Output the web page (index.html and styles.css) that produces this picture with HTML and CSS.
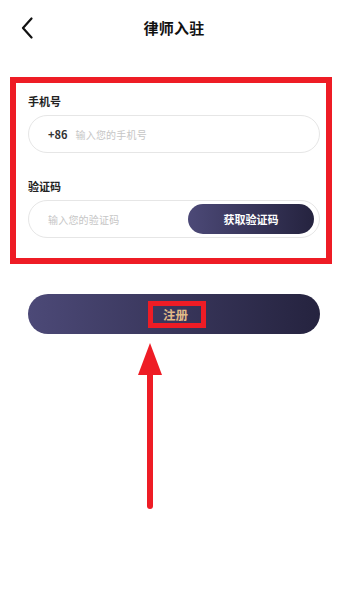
FILE: index.html
```html
<!DOCTYPE html>
<html lang="zh-CN">
<head>
<meta charset="utf-8">
<title>律师入驻</title>
<link rel="stylesheet" href="styles.css">
</head>
<body>
<div class="page">
  <header class="nav">
    <div class="nav-left">
      <svg class="back" width="12" height="22" viewBox="0 0 12 22"><path d="M10.5 1.5 L2 11 L10.5 20.5" fill="none" stroke="#111" stroke-width="2.2" stroke-linecap="round" stroke-linejoin="round"/></svg>
    </div>
    <h1 class="title">律师入驻</h1>
    <div class="nav-right"></div>
  </header>

  <section class="mark-box">
    <div class="field">
      <div class="label">手机号</div>
      <div class="input">
        <span class="prefix">+86</span>
        <span class="placeholder">输入您的手机号</span>
      </div>
    </div>
    <div class="field field-code">
      <div class="label">验证码</div>
      <div class="input input-code">
        <span class="placeholder">输入您的验证码</span>
        <span class="code-btn">获取验证码</span>
      </div>
    </div>
  </section>

  <div class="submit">
    <span class="submit-text">注册</span>
  </div>

  <div class="arrow-wrap">
    <svg width="24" height="166" viewBox="0 0 24 166">
      <polygon points="12,0 0,32 24,32" fill="#ee1c25"/>
      <line x1="12" y1="30" x2="12" y2="163" stroke="#ee1c25" stroke-width="6" stroke-linecap="round"/>
    </svg>
  </div>
</div>
</body>
</html>
```

FILE: styles.css
```css
* { box-sizing: border-box; }
html, body { margin: 0; padding: 0; background: #fff; }
body {
  font-family: "Noto Sans CJK SC", "Noto Sans", sans-serif;
  color: #222;
  width: 348px;
}
.page { width: 348px; }

.nav {
  height: 56px;
  display: grid;
  grid-template-columns: 1fr auto 1fr;
  align-items: center;
}
.nav-left { padding-left: 21px; display: flex; align-items: center; }
.back { display: block; }
.title {
  margin: 0;
  font-size: 15px;
  font-weight: 600;
  line-height: 20px;
  color: #111;
  letter-spacing: 0.2px;
}

.mark-box {
  margin: 21px 16px 0 10px;
  border: 6px solid #ee1c25;
  padding: 10px 6px 20px 12px;
}
.field-code { margin-top: 25px; }
.label {
  font-size: 11px;
  font-weight: 700;
  line-height: 16px;
  color: #222;
  margin-bottom: 6px;
}
.input {
  height: 38px;
  border: 1px solid #e6e6e6;
  border-radius: 19px;
  display: flex;
  align-items: center;
  padding-left: 19px;
}
.prefix {
  font-size: 11px;
  font-weight: 700;
  color: #333;
  margin-right: 8px;
}
.placeholder {
  font-size: 10px;
  color: #c6c6c6;
  letter-spacing: 0.2px;
}
.input-code {
  justify-content: space-between;
  padding-right: 5px;
}
.code-btn {
  width: 126px;
  height: 30px;
  border-radius: 15px;
  background: linear-gradient(90deg, #4c4977 0%, #25233f 100%);
  color: #fff;
  font-size: 11px;
  font-weight: 700;
  display: flex;
  align-items: center;
  justify-content: center;
}

.submit {
  margin: 30px 28px 0 28px;
  height: 40px;
  border-radius: 20px;
  background: linear-gradient(90deg, #4c4977 0%, #25233f 100%);
  display: flex;
  align-items: center;
  justify-content: center;
}
.submit-text {
  display: inline-flex;
  align-items: center;
  height: 27px;
  border: 5px solid #ee1c25;
  padding: 0 13px 0 10px;
  margin-left: 6px;
  font-size: 12.5px;
  font-weight: 700;
  color: #e2bb88;
}

.arrow-wrap {
  margin-top: 9px;
  padding-left: 138px;
  line-height: 0;
}
.arrow-wrap svg { display: block; }
```
